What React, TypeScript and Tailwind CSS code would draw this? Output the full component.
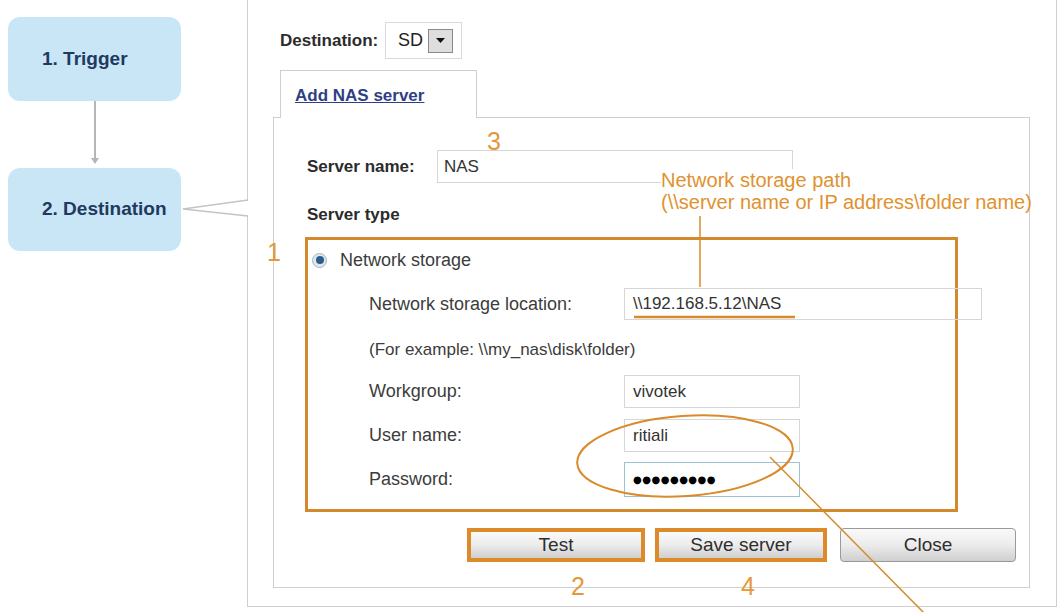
import { FC } from "react";

const orange = "#d98b2b";

const Field: FC<{ label: string; width: string; height?: string; children?: React.ReactNode; blue?: boolean; mt: string }> = ({
	label,
	width,
	height = "h-[33px]",
	children,
	blue,
	mt,
}) => {
	return (
		<div className={`flex items-center ml-[61px] ${mt}`}>
			<span className="w-[255px] shrink-0 text-[18px] text-[#3c3c3c]">{label}</span>
			<div
				className={`${width} ${height} shrink-0 border ${blue ? "border-[#9fc3d6]" : "border-[#d6d6d6]"} flex items-center pl-[8px] text-[17px] text-[#333]`}
			>
				{children}
			</div>
		</div>
	);
};

const GrayButton: FC<{ label: string; className?: string }> = ({ label, className = "" }) => {
	return (
		<div
			className={`flex items-center justify-center bg-linear-to-b from-[#fafafa] via-[#ececec] to-[#cfcfcf] text-[19px] text-[#2e2e2e] ${className}`}
		>
			{label}
		</div>
	);
};

const App: FC = () => {
	return (
		<div className="relative flex w-[1062px] h-[612px] overflow-hidden bg-white font-['Liberation_Sans',Arial,sans-serif]">
			{/* steps */}
			<div className="w-[247px] shrink-0 pl-[8px] pt-[17px] flex flex-col">
				<div className="w-[173px] h-[84px] rounded-[12px] bg-[#c9e6f7] flex items-center pl-[34px] font-bold text-[19px] text-[#22395f]">
					1. Trigger
				</div>
				<div className="h-[67px] w-[173px] flex justify-center">
					<svg width="12" height="67" viewBox="0 0 12 67">
						<line x1="6" y1="0" x2="6" y2="60" stroke="#b5b5b5" strokeWidth="2" />
						<path d="M2 57 L6 63 L10 57 Z" fill="#b5b5b5" />
					</svg>
				</div>
				<div className="w-[173px] h-[83px] rounded-[12px] bg-[#c9e6f7] flex items-center pl-[34px] font-bold text-[19px] text-[#22395f]">
					2. Destination
				</div>
			</div>

			{/* main panel */}
			<div className="w-[810px] h-[607px] border-l border-r border-b border-[#cfcfcf] flex flex-col">
				<div className="flex items-center ml-[32px] mt-[22px] h-[37px]">
					<span className="font-bold text-[17px] text-[#2b2b2b] w-[105px]">Destination:</span>
					<div className="w-[77px] h-[37px] border border-[#dadada] flex items-center pl-[12px]">
						<span className="text-[18px] text-[#222] w-[30px]">SD</span>
						<div className="w-[25px] h-[24px] border border-[#8a8a8a] bg-[#dedede] flex items-center justify-center">
							<svg width="9" height="6" viewBox="0 0 9 6">
								<path d="M0 0 H9 L4.5 5 Z" fill="#111" />
							</svg>
						</div>
					</div>
				</div>

				<div className="ml-[25px] mt-[11px] w-[757px] flex flex-col">
					<div className="ml-[7px] w-[197px] h-[48px] border border-b-0 border-[#cfcfcf] bg-white relative z-10 -mb-px pl-[14px] pt-[12px]">
						<span className="font-bold text-[17px] text-[#2f3f86] underline">Add NAS server</span>
					</div>
					<div className="h-[471px] border border-[#cfcfcf] flex flex-col">
						<div className="flex items-center ml-[33px] mt-[32px]">
							<span className="w-[130px] font-bold text-[17px] text-[#2b2b2b]">Server name:</span>
							<div className="w-[356px] h-[33px] border border-[#d6d6d6] flex items-center pl-[6px] text-[17px] text-[#333]">
								NAS
							</div>
						</div>
						<div className="ml-[33px] mt-[22px] h-[20px] leading-[20px] font-bold text-[17px] text-[#2b2b2b]">
							Server type
						</div>

						<div className="ml-[31px] mt-[12px] w-[653px] h-[275px] border-[3px] border-[#d4892c] flex flex-col">
							<div className="flex items-center h-[20px] mt-[10px] ml-[4px]">
								<div className="w-[15px] h-[15px] rounded-full border border-[#a9b4bf] bg-[#dfe6ec] flex items-center justify-center">
									<div className="w-[8px] h-[8px] rounded-full bg-[#2c5d8f]" />
								</div>
								<span className="ml-[13px] text-[18px] text-[#3c3c3c]">Network storage</span>
							</div>
							<Field label="Network storage location:" width="w-[358px]" height="h-[32px]" mt="mt-[18px]">
								\\192.168.5.12\NAS
							</Field>
							<div className="ml-[61px] mt-[20px] h-[20px] leading-[20px] text-[17px] text-[#3c3c3c]">
								(For example: \\my_nas\disk\folder)
							</div>
							<Field label="Workgroup:" width="w-[176px]" mt="mt-[15px]">
								vivotek
							</Field>
							<Field label="User name:" width="w-[176px]" mt="mt-[11px]">
								ritiali
							</Field>
							<Field label="Password:" width="w-[176px]" height="h-[35px]" blue mt="mt-[10px]">
								<span className="text-[10px] tracking-[0.5px] text-black font-['DejaVu_Sans',sans-serif]">
									●●●●●●●●●
								</span>
							</Field>
						</div>

						<div className="flex ml-[193px] mt-[16px] h-[34px]">
							<div className="w-[178px] h-[34px] border-[4px] border-[#dc8a2a] flex">
								<GrayButton label="Test" className="flex-1" />
							</div>
							<div className="ml-[10px] w-[172px] h-[34px] border-[4px] border-[#dc8a2a] flex">
								<GrayButton label="Save server" className="flex-1" />
							</div>
							<GrayButton label="Close" className="ml-[13px] w-[176px] h-[34px] border border-[#9a9a9a] rounded-[4px]" />
						</div>
					</div>
				</div>
			</div>

			{/* connector + annotation drawing */}
			<svg className="absolute inset-0 pointer-events-none" width="1062" height="612" viewBox="0 0 1062 612">
				<line x1="247.5" y1="201" x2="247.5" y2="215" stroke="#fff" strokeWidth="3" />
				<line x1="183" y1="209" x2="248" y2="200" stroke="#c4c4c4" strokeWidth="1.5" />
				<line x1="183" y1="209" x2="248" y2="216" stroke="#c4c4c4" strokeWidth="1.5" />
				<line x1="700" y1="216" x2="700" y2="287" stroke={orange} strokeWidth="1.5" />
				<line x1="634" y1="317" x2="795" y2="317" stroke={orange} strokeWidth="2.5" />
				<ellipse cx="685" cy="456" rx="108" ry="40" fill="none" stroke={orange} strokeWidth="2" transform="rotate(-4 685 456)" />
				<line x1="770" y1="457" x2="927" y2="616" stroke={orange} strokeWidth="1.5" />
			</svg>

			<span className="absolute left-[487px] top-[129px] text-[25px] leading-[25px] text-[#e4983a]">3</span>
			<span className="absolute left-[267px] top-[240px] text-[25px] leading-[25px] text-[#e4983a]">1</span>
			<span className="absolute left-[571px] top-[574px] text-[25px] leading-[25px] text-[#e4983a]">2</span>
			<span className="absolute left-[741px] top-[574px] text-[25px] leading-[25px] text-[#e4983a]">4</span>
			<div className="absolute left-[661px] top-[169px] flex flex-col text-[20px] leading-[22px] text-[#e0922f]">
				<span className="bg-white w-fit">Network storage path</span>
				<span>(\\server name or IP address\folder name)</span>
			</div>
		</div>
	);
};

export default App;
